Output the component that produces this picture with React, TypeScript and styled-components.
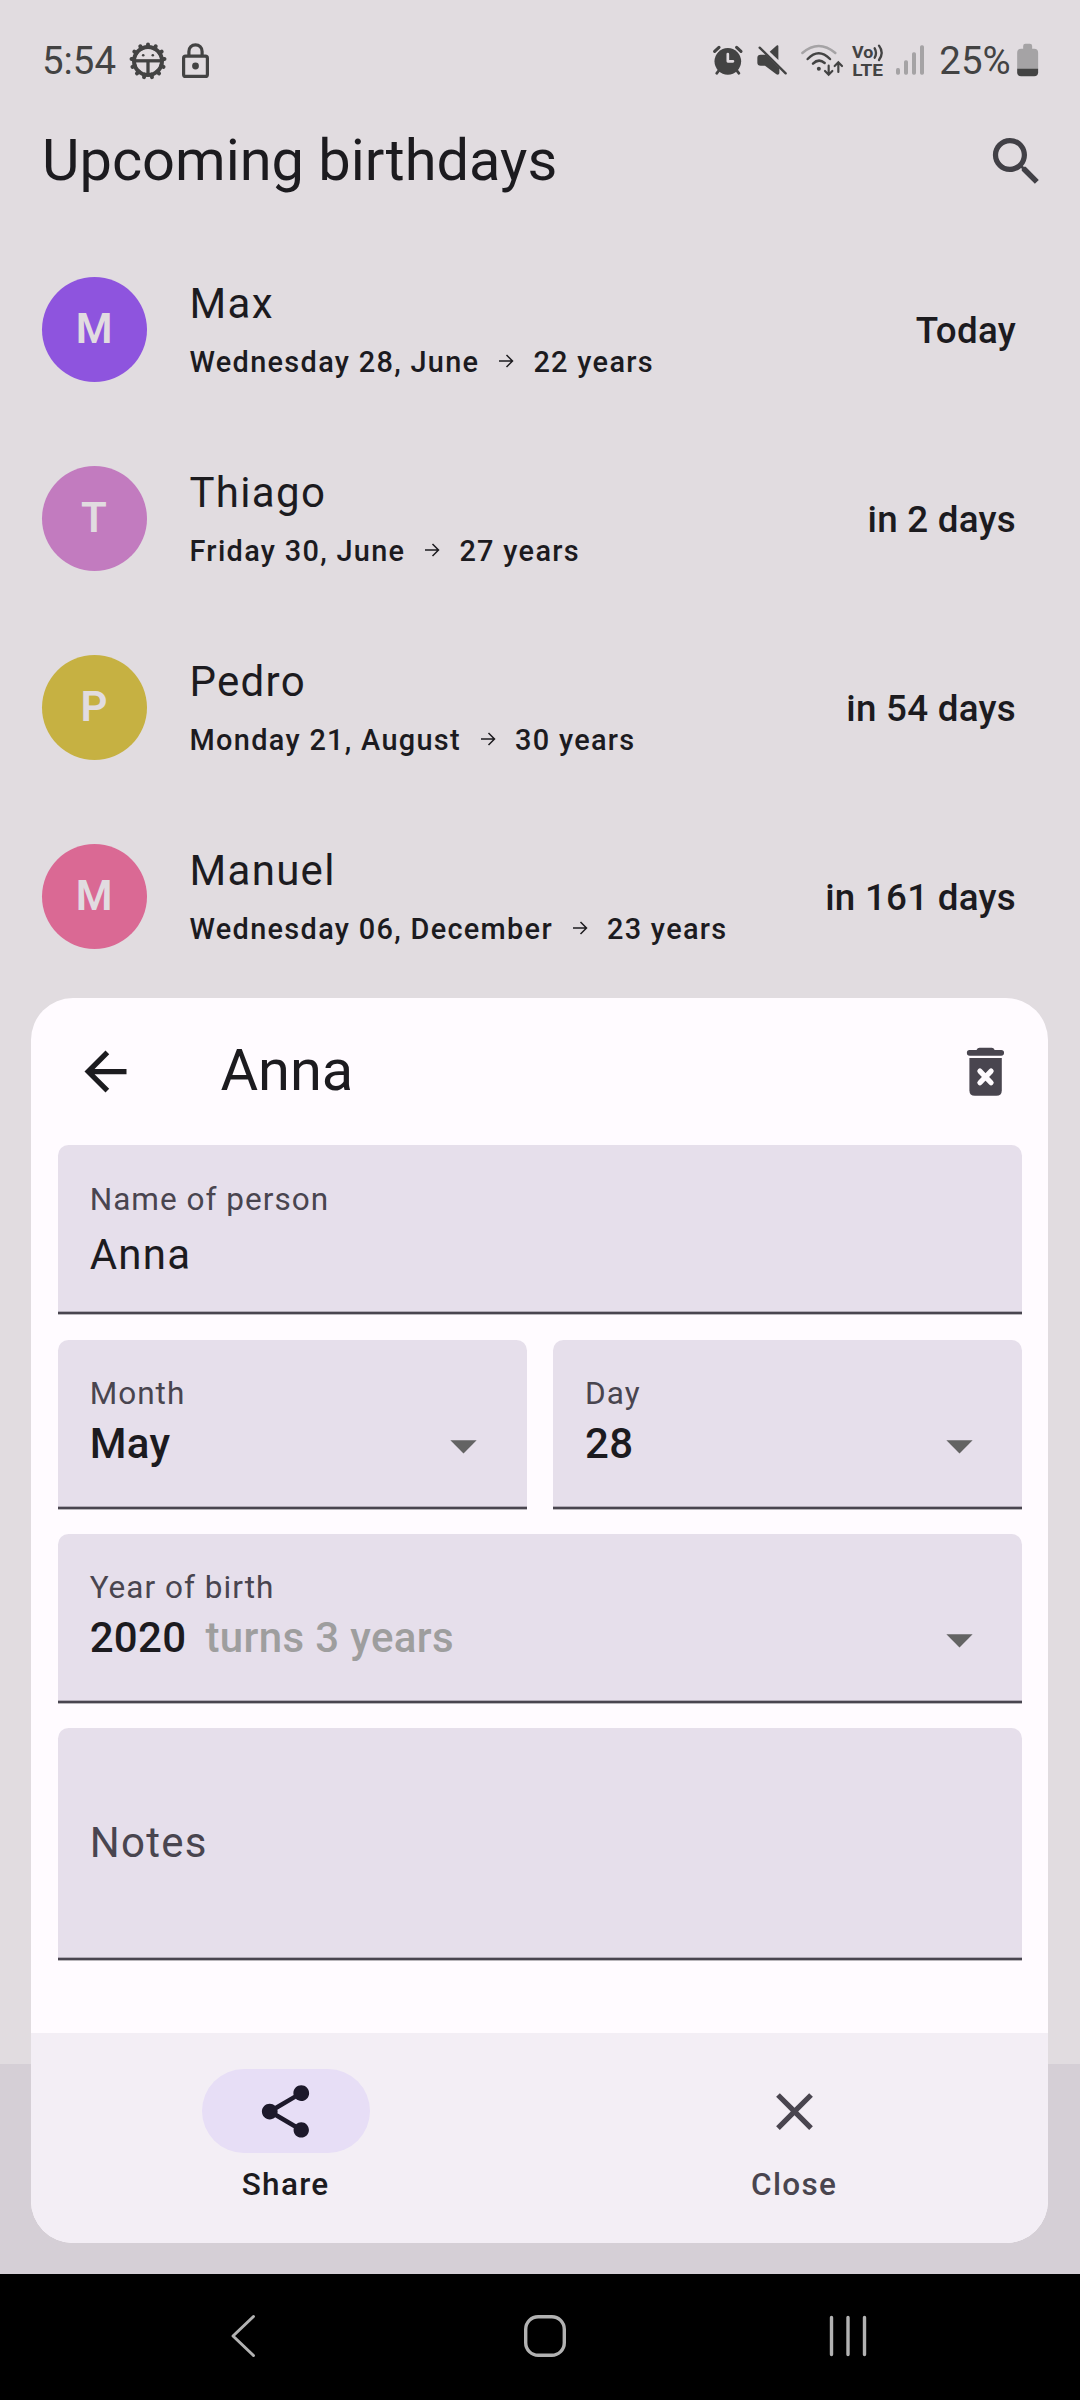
import React from "react";
import styled, { createGlobalStyle } from "styled-components";

const color = {
  dimmed: "#e1dce0",
  dimmedBar: "#d5cfd6",
  ink: "#1c1b1f",
  muted: "#49454f",
  status: "#434343",
  statusFaint: "#a5a3a5",
  sheet: "#fffbff",
  field: "#e6dfeb",
  footer: "#f3eef5",
  pill: "#e7def6",
  hint: "#9e9e9e",
  nav: "#b2b2b2",
};

const GlobalStyle = createGlobalStyle`
  body {
    margin: 0;
    background: ${color.dimmed};
    font-family: Roboto, "Liberation Sans", sans-serif;
    color: ${color.ink};
  }
  svg { display: block; flex: none; overflow: visible; }
`;

const Screen = styled.div`
  position: relative;
  width: 1080px;
  height: 2400px;
  overflow: hidden;
  display: flex;
  flex-direction: column;
  background: ${color.dimmed};
`;

const StatusBar = styled.header`
  box-sizing: border-box;
  height: 78px;
  padding: 43.3px 41.7px 0 42px;
  display: flex;
  justify-content: space-between;
  color: ${color.status};
`;

const StatusGroup = styled.div`
  display: flex;
  align-items: center;
  height: 35px;
`;

const StatusText = styled.span`
  font-size: 38.4px;
  line-height: 35px;
  white-space: nowrap;
`;

const StatusSlot = styled.div<{ $before: number }>`
  margin-left: ${(p) => p.$before}px;
`;

const AppBar = styled.div`
  box-sizing: border-box;
  height: 157px;
  padding: 9px 32px 0 42px;
  display: flex;
  align-items: center;
  justify-content: space-between;
`;

const Title = styled.h1`
  margin: 0;
  padding-bottom: 3px;
  font-size: 57.75px;
  line-height: 74px;
  font-weight: 400;
  white-space: nowrap;
`;

const List = styled.main`
  flex: 1;
  display: flex;
  flex-direction: column;
`;

const Row = styled.article`
  height: 189px;
  padding: 0 64px 0 42px;
  display: flex;
  align-items: center;
  gap: 42.5px;
`;

const Avatar = styled.div<{ $fill: string }>`
  box-sizing: border-box;
  flex: none;
  width: 105px;
  height: 105px;
  padding: 0 1px 2px 0;
  border-radius: 50%;
  display: flex;
  align-items: center;
  justify-content: center;
  background: ${(p) => p.$fill};
  color: ${color.dimmed};
  font-size: 42px;
  line-height: 63px;
  font-weight: 600;
`;

const Person = styled.div`
  flex: 1;
  padding-bottom: 4px;
`;

const PersonName = styled.div`
  font-size: 42px;
  line-height: 63px;
  letter-spacing: 1.31px;
`;

const PersonMeta = styled.div`
  margin-top: 6px;
  display: flex;
  align-items: center;
  font-size: 28.9px;
  line-height: 42px;
  font-weight: 500;
  letter-spacing: 1.31px;
  white-space: nowrap;
`;

const MetaArrow = styled.div`
  padding: 0 19.2px 2px 18.8px;
`;

const Countdown = styled.div`
  padding-top: 2px;
  font-size: 36.75px;
  line-height: 52px;
  font-weight: 500;
  letter-spacing: 0.26px;
`;

const DimmedBar = styled.div`
  height: 210px;
  background: ${color.dimmedBar};
`;

const SystemNav = styled.nav`
  box-sizing: border-box;
  height: 126px;
  padding: 0 212px 2px 229px;
  display: flex;
  align-items: center;
  justify-content: space-between;
  background: #000;
`;

const Sheet = styled.section`
  position: absolute;
  left: 31.4px;
  top: 998px;
  width: 1017px;
  height: 1244.5px;
  border-radius: 42px;
  overflow: hidden;
  display: flex;
  flex-direction: column;
  background: ${color.sheet};
`;

const SheetHeader = styled.div`
  box-sizing: border-box;
  height: 147px;
  padding: 0 31.5px 0 42.4px;
  display: flex;
  align-items: center;
`;

const SheetTitle = styled(Title)`
  flex: 1;
  padding: 0 0 4px 83.6px;
`;

const Form = styled.div`
  flex: 1;
  padding: 0 26.25px;
  display: flex;
  flex-direction: column;
  gap: 24px;
`;

const Field = styled.div<{ $height?: number }>`
  box-sizing: border-box;
  height: ${(p) => p.$height ?? 170}px;
  padding: 33px 31.5px 3px 32px;
  border-radius: 10.5px 10.5px 0 0;
  background: linear-gradient(
    to bottom,
    ${color.field} calc(100% - 4px),
    #b1abb6 calc(100% - 4px) calc(100% - 3px),
    ${color.muted} calc(100% - 3px) calc(100% - 1px),
    #b9b6bb calc(100% - 1px)
  );
`;

const NameField = styled(Field)`
  padding-top: 34px;
  margin-bottom: 1px;
`;

const NotesField = styled(Field)`
  padding-top: 0;
  padding-bottom: 4px;
  display: flex;
  align-items: center;
`;

const FieldPair = styled.div`
  display: grid;
  grid-template-columns: 1fr 1fr;
  gap: 26.25px;
`;

const Label = styled.div`
  font-size: 31.5px;
  line-height: 42px;
  letter-spacing: 1.02px;
  color: ${color.muted};
`;

const TextValue = styled.div`
  margin-top: 2px;
  font-size: 42px;
  line-height: 63px;
  letter-spacing: 1.31px;
`;

const Placeholder = styled.div`
  font-size: 42px;
  line-height: 63px;
  letter-spacing: 1.31px;
  color: ${color.muted};
`;

const SelectValue = styled.div`
  height: 58px;
  display: flex;
  align-items: center;
  font-size: 42px;
  line-height: 58px;
  font-weight: 500;
  letter-spacing: 0.35px;
  white-space: nowrap;
`;

const Hint = styled.span`
  margin-left: 19px;
  color: ${color.hint};
`;

const Caret = styled.div`
  margin-left: auto;
  padding-top: 2px;
`;

const SheetFooter = styled.footer`
  height: 210px;
  display: grid;
  grid-template-columns: 1fr 1fr;
  background: ${color.footer};
`;

const Action = styled.button<{ $active?: boolean }>`
  border: 0;
  background: none;
  padding: 36.5px 0 0;
  display: flex;
  flex-direction: column;
  align-items: center;
  gap: 11px;
  font: 500 31.5px/42px Roboto, "Liberation Sans", sans-serif;
  letter-spacing: 1.31px;
  color: ${(p) => (p.$active ? color.ink : color.muted)};
`;

const ActionPill = styled.div<{ $active?: boolean }>`
  width: 168px;
  height: 84px;
  border-radius: 42px;
  display: flex;
  align-items: center;
  justify-content: center;
  background: ${(p) => (p.$active ? color.pill : "transparent")};
  color: ${(p) => (p.$active ? "#1d192b" : color.muted)};
`;

const Icon = ({ d, fill = "currentColor" }: { d: string; fill?: string }) => (
  <svg width="63" height="63" viewBox="0 0 24 24" fill={fill}>
    <path d={d} />
  </svg>
);

const SEARCH =
  "M15.5 14h-.79l-.28-.27C15.41 12.59 16 11.11 16 9.5 16 5.91 13.09 3 9.5 3S3 5.91 3 9.5 5.91 16 9.5 16c1.61 0 3.09-.59 4.23-1.57l.27.28v.79l5 4.99L20.49 19l-4.99-5zm-6 0C7.01 14 5 11.99 5 9.5S7.01 5 9.5 5 14 7.01 14 9.5 11.99 14 9.5 14z";
const BACK = "M20 11H7.83l5.59-5.59L12 4l-8 8 8 8 1.41-1.41L7.83 13H20v-2z";
const CARET = "M7 10l5 5 5-5z";
const SHARE =
  "M18 16.08c-.76 0-1.44.3-1.96.77L8.91 12.7c.05-.23.09-.46.09-.7s-.04-.47-.09-.7l7.05-4.11c.54.5 1.25.81 2.04.81 1.66 0 3-1.34 3-3s-1.34-3-3-3-3 1.34-3 3c0 .24.04.47.09.7L8.04 9.81C7.5 9.31 6.79 9 6 9c-1.66 0-3 1.34-3 3s1.34 3 3 3c.79 0 1.5-.31 2.04-.81l7.12 4.16c-.05.21-.08.43-.08.65 0 1.61 1.31 2.92 2.92 2.92s2.92-1.31 2.92-2.92-1.31-2.92-2.92-2.92z";
const CLOSE =
  "M19 6.41L17.59 5 12 10.59 6.41 5 5 6.41 10.59 12 5 17.59 6.41 19 12 13.41 17.59 19 19 17.59 13.41 12z";

const GearFace = () => (
  <svg width="38" height="38" viewBox="-19 -19 38 38" fill="none" stroke={color.status}>
    <circle r="14" strokeWidth="4" />
    {Array.from({ length: 13 }, (_, i) => (
      <path key={i} d="M0 14V16.6" strokeWidth="4" strokeLinecap="round" transform={`rotate(${(i * 360) / 13 + 180})`} />
    ))}
    <path d="M-13 -0.2H13" strokeWidth="3.3" />
    <path d="M0 0V14" strokeWidth="3.3" />
    <circle cx="-4.8" cy="-5.8" r="1.3" fill={color.status} stroke="none" />
    <circle cx="4.8" cy="-5.8" r="1.3" fill={color.status} stroke="none" />
  </svg>
);

const Lock = () => (
  <svg width="27" height="35" viewBox="0 0 27 35" fill="none" stroke={color.status} strokeWidth="3.2">
    <rect x="1.6" y="13.2" width="23.8" height="20.2" rx="2" />
    <path d="M6.900 13V8.400a6.600 6.600 0 0 1 13.200 0V13" />
    <circle cx="13.5" cy="23" r="3.4" fill={color.status} stroke="none" />
  </svg>
);

const Alarm = () => (
  <svg width="29.3" height="35" viewBox="98 130 88 105" fill="none" stroke={color.status} strokeLinecap="round">
    <circle cx="142.5" cy="185" r="40" fill={color.status} stroke="none" />
    <path d="M103 155l13-12M182 155l-13-12" strokeWidth="9.5" />
    <path d="M116 212l-7 9M169 212l7 9" strokeWidth="8" />
    <path d="M142.500 163V185H158" stroke={color.dimmed} strokeWidth="8" strokeLinejoin="round" />
  </svg>
);

const Muted = () => (
  <svg width="29.7" height="35" viewBox="233 130 89 105" fill={color.status}>
    <path d="M297 140V181L271 156L293 137Q297 135 297 140Z" />
    <path d="M244 165H260L300 206V221Q298 228 291 224L257 198H244Q234 198 234 189V174Q234 165 244 165Z" />
    <path d="M241 144L319 221" stroke={color.status} strokeWidth="7" strokeLinecap="round" />
  </svg>
);

const Wifi = () => (
  <svg width="42" height="35" viewBox="363 130 126 105" fill="none" stroke={color.status} strokeWidth="7.5" strokeLinecap="round">
    <path d="M367 160Q416 118 466 160" stroke={color.statusFaint} />
    <path d="M383 178Q416 143 450 178" />
    <path d="M399 192Q416 175 434 190" />
    <circle cx="416.500" cy="207" r="6" fill={color.status} stroke="none" />
    <path d="M446 198V224M435 214L446 225L457 214M475 217V189M464 199L475 188L486 199" strokeWidth="6.5" />
  </svg>
);

const VoLte = () => (
  <svg width="32" height="35" viewBox="514 130 96 105" fill={color.status}>
    <text x="514" y="174" fontSize="51" fontWeight="700" textLength="64" lengthAdjust="spacingAndGlyphs" fontFamily="Roboto, sans-serif">Vo</text>
    <text x="515" y="228" fontSize="51" fontWeight="700" textLength="92" lengthAdjust="spacingAndGlyphs" fontFamily="Roboto, sans-serif">LTE</text>
    <path d="M582 146Q590 160 582 174M595 138Q611 159 595 181" fill="none" stroke={color.status} strokeWidth="7" strokeLinecap="round" />
  </svg>
);

const Signal = () => (
  <svg width="28" height="35" viewBox="648 130 84 105" fill={color.statusFaint}>
    <rect x="648" y="205" width="12" height="20" rx="5" />
    <rect x="672" y="182" width="12" height="43" rx="5" />
    <rect x="696" y="158" width="12" height="67" rx="5" />
    <rect x="720" y="137" width="12" height="88" rx="5" />
  </svg>
);

const Battery = () => (
  <svg width="21.3" height="35" viewBox="1010.500 130 64 105">
    <path d="M1029 150V139Q1029 132 1036 132H1049Q1056 132 1056 139V147H1062Q1074 147 1074 159V208H1011V159Q1011 147 1023 147H1029Z" fill={color.statusFaint} />
    <path d="M1011 207H1074V218Q1074 230 1062 230H1023Q1011 230 1011 218Z" fill={color.status} />
  </svg>
);

const ThinArrow = () => (
  <svg width="16" height="16" viewBox="0 0 16 16" fill="none" stroke={color.ink} strokeWidth="1.5">
    <path d="M1 8H14.500M8.500 2L14.500 8L8.500 14" />
  </svg>
);

const Trash = () => (
  <svg width="63" height="63" viewBox="0 0 63 63" fill={color.muted}>
    <path d="M15.400 18H47.800V50.200Q47.800 55.700 42.300 55.700H20.900Q15.400 55.700 15.400 50.200Z" />
    <path d="M15.600 10H22.500Q23.500 7.800 25.500 7.800H37.700Q39.700 7.800 40.700 10H47.200A2.800 2.800 0 0 1 47.200 15.700H15.800A2.800 2.800 0 0 1 15.600 10Z" />
    <path d="M25.900 31.100L37.100 42.700M37.100 31.100L25.900 42.700" stroke={color.sheet} strokeWidth="5.200" strokeLinecap="round" />
  </svg>
);

const NavBack = () => (
  <svg width="28" height="44" viewBox="0 0 28 44" fill="none" stroke={color.nav} strokeWidth="3" strokeLinecap="round" strokeLinejoin="round">
    <path d="M24.500 2.500L4 22L24.500 41.500" />
  </svg>
);

const NavHome = () => (
  <svg width="48" height="44" viewBox="-4 0 48 44" fill="none" stroke={color.nav} strokeWidth="3.400">
    <rect x="2.700" y="2.700" width="38.600" height="38.600" rx="12.500" />
  </svg>
);

const NavRecents = () => (
  <svg width="40" height="42" viewBox="0 0 40 42" stroke={color.nav} strokeWidth="3.400" strokeLinecap="round">
    <path d="M3.500 2.500V39.500M20 2.500V39.500M36.500 2.500V39.500" />
  </svg>
);

const people = [
  { name: "Max", date: "Wednesday 28, June", age: "22 years", due: "Today", fill: "#8e54de" },
  { name: "Thiago", date: "Friday 30, June", age: "27 years", due: "in 2 days", fill: "#c27bbf" },
  { name: "Pedro", date: "Monday 21, August", age: "30 years", due: "in 54 days", fill: "#c6b142" },
  { name: "Manuel", date: "Wednesday 06, December", age: "23 years", due: "in 161 days", fill: "#da6994" },
];

const Select = ({ label, value, hint }: { label: string; value: string; hint?: string }) => (
  <Field>
    <Label>{label}</Label>
    <SelectValue>
      {value}
      {hint && <Hint>{hint}</Hint>}
      <Caret>
        <Icon d={CARET} fill="#636363" />
      </Caret>
    </SelectValue>
  </Field>
);

export default function App() {
  return (
    <>
      <GlobalStyle />
      <Screen>
        <StatusBar>
          <StatusGroup>
            <StatusText>5:54</StatusText>
            <StatusSlot $before={13}><GearFace /></StatusSlot>
            <StatusSlot $before={14.5}><Lock /></StatusSlot>
          </StatusGroup>
          <StatusGroup>
            <Alarm />
            <StatusSlot $before={15.6}><Muted /></StatusSlot>
            <StatusSlot $before={13.8}><Wifi /></StatusSlot>
            <StatusSlot $before={8.6}><VoLte /></StatusSlot>
            <StatusSlot $before={12.6}><Signal /></StatusSlot>
            <StatusSlot $before={15.2}><StatusText>25%</StatusText></StatusSlot>
            <StatusSlot $before={6.4}><Battery /></StatusSlot>
          </StatusGroup>
        </StatusBar>
        <AppBar>
          <Title>Upcoming birthdays</Title>
          <Icon d={SEARCH} fill="#414046" />
        </AppBar>
        <List>
          {people.map((p) => (
            <Row key={p.name}>
              <Avatar $fill={p.fill}>{p.name[0]}</Avatar>
              <Person>
                <PersonName>{p.name}</PersonName>
                <PersonMeta>
                  {p.date}
                  <MetaArrow><ThinArrow /></MetaArrow>
                  {p.age}
                </PersonMeta>
              </Person>
              <Countdown>{p.due}</Countdown>
            </Row>
          ))}
        </List>
        <DimmedBar />
        <SystemNav>
          <NavBack />
          <NavHome />
          <NavRecents />
        </SystemNav>
        <Sheet>
          <SheetHeader>
            <Icon d={BACK} />
            <SheetTitle as="h2">Anna</SheetTitle>
            <Trash />
          </SheetHeader>
          <Form>
            <NameField>
              <Label>Name of person</Label>
              <TextValue>Anna</TextValue>
            </NameField>
            <FieldPair>
              <Select label="Month" value="May" />
              <Select label="Day" value="28" />
            </FieldPair>
            <Select label="Year of birth" value="2020" hint="turns 3 years" />
            <NotesField $height={233}>
              <Placeholder>Notes</Placeholder>
            </NotesField>
          </Form>
          <SheetFooter>
            <Action $active>
              <ActionPill $active><Icon d={SHARE} /></ActionPill>
              Share
            </Action>
            <Action>
              <ActionPill><Icon d={CLOSE} /></ActionPill>
              Close
            </Action>
          </SheetFooter>
        </Sheet>
      </Screen>
    </>
  );
}
